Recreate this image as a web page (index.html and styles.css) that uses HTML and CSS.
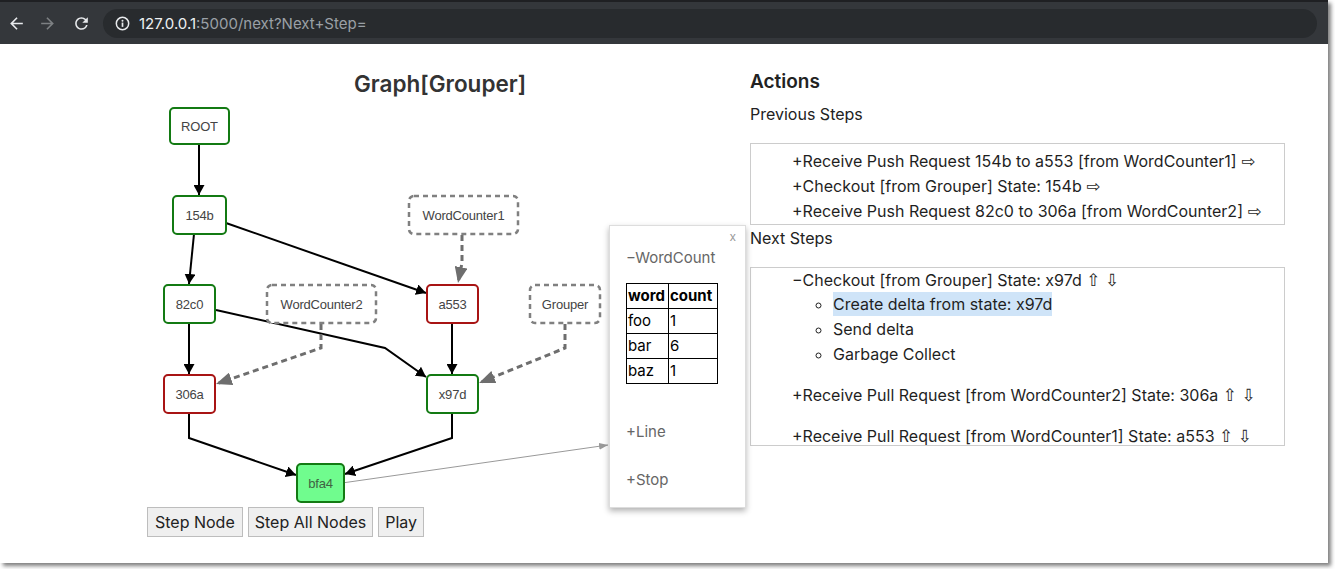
FILE: index.html
```html
<!DOCTYPE html>
<html>
<head>
<meta charset="utf-8">
<link rel="stylesheet" href="styles.css">
</head>
<body>
<div class="window">
  <div class="tabstrip"></div>
  <div class="toolbar">
    <span class="nav back"><svg width="19" height="19" viewBox="0 0 24 24"><path d="M20 11H7.83l5.59-5.59L12 4l-8 8 8 8 1.41-1.41L7.83 13H20v-2z" fill="#e8eaed"/></svg></span>
    <span class="nav fwd"><svg width="19" height="19" viewBox="0 0 24 24"><path d="M12 4l-1.41 1.41L16.17 11H4v2h12.17l-5.58 5.59L12 20l8-8z" fill="#7d8083"/></svg></span>
    <span class="nav reload"><svg width="19" height="19" viewBox="0 0 24 24"><path d="M17.65 6.35A7.958 7.958 0 0 0 12 4c-4.42 0-7.990 3.58-7.99 8s3.57 8 7.99 8c3.73 0 6.84-2.55 7.73-6h-2.08A5.99 5.99 0 0 1 12 18c-3.31 0-6-2.69-6-6s2.69-6 6-6c1.66 0 3.14.69 4.22 1.78L13 11h7V4l-2.35 2.35z" fill="#e8eaed"/></svg></span>
    <div class="omnibox">
      <svg class="info" width="15" height="15" viewBox="0 0 16 16"><circle cx="8" cy="8" r="6.6" fill="none" stroke="#e8eaed" stroke-width="1.6"/><rect x="7.1" y="7" width="1.8" height="4.6" fill="#e8eaed"/><circle cx="8" cy="5" r="1.05" fill="#e8eaed"/></svg>
      <span class="host">127.0.0.1</span><span class="path">:5000/next?Next+Step=</span>
    </div>
  </div>
  <div class="page">
    <div class="graph-col">
      <h2 class="graph-title">Graph[Grouper]</h2>
      <svg class="graph" width="590" height="410" viewBox="145 97 590 410">
        <defs>
          <marker id="ah" viewBox="0 0 10 11" refX="10" refY="5.5" markerWidth="10" markerHeight="11" markerUnits="userSpaceOnUse" orient="auto"><path d="M0,0 L10,5.5 L0,11 z" fill="#000" stroke="none"/></marker>
          <marker id="ahg" viewBox="0 0 16 13" refX="13" refY="6.5" markerWidth="16" markerHeight="13" markerUnits="userSpaceOnUse" orient="auto"><path d="M0,0 L16,6.5 L0,13 z" fill="#6e6e6e" stroke="none"/></marker>
          <marker id="aht" viewBox="0 0 9 7" refX="9" refY="3.5" markerWidth="9" markerHeight="7" markerUnits="userSpaceOnUse" orient="auto"><path d="M0,0 L9,3.5 L0,7 z" fill="#999" stroke="none"/></marker>
        </defs>
        <g class="edges">
          <path d="M199,144 L199,195" marker-end="url(#ah)"/>
          <path d="M194,234 L189,284" marker-end="url(#ah)"/>
          <path d="M226,223 L426,293" marker-end="url(#ah)"/>
          <path d="M216,310 L385,348 L426,377" marker-end="url(#ah)"/>
          <path d="M189,323 L189,374" marker-end="url(#ah)"/>
          <path d="M452,323 L452,374" marker-end="url(#ah)"/>
          <path d="M189,413 L189,438 L296,475" marker-end="url(#ah)"/>
          <path d="M452,413 L452,438 L345,474" marker-end="url(#ah)"/>
        </g>
        <g class="dep-edges">
          <path d="M462,235 L462,263 L458.6,280" marker-end="url(#ahg)"/>
          <path d="M321,324 L321,348 L218.8,383" marker-end="url(#ahg)"/>
          <path d="M565,324 L565,348 L481.8,381.9" marker-end="url(#ahg)"/>
        </g>
        <path class="link" d="M342,483 L608,445" marker-end="url(#aht)"/>
        <g class="nodes">
          <rect class="ok" x="170" y="108" width="59" height="36" rx="4"/>
          <text x="199.5" y="126">ROOT</text>
          <rect class="ok" x="173" y="196" width="53" height="38" rx="4"/>
          <text x="199.5" y="215">154b</text>
          <rect class="dep" x="409" y="196" width="109" height="38" rx="5"/>
          <text x="463.5" y="215">WordCounter1</text>
          <rect class="ok" x="164" y="285" width="51" height="38" rx="4"/>
          <text x="189.5" y="304">82c0</text>
          <rect class="dep" x="267" y="285" width="109" height="38" rx="5"/>
          <text x="321.5" y="304">WordCounter2</text>
          <rect class="bad" x="427" y="285" width="51" height="38" rx="4"/>
          <text x="452.5" y="304">a553</text>
          <rect class="dep" x="530" y="285" width="70" height="38" rx="5"/>
          <text x="565" y="304">Grouper</text>
          <rect class="bad" x="164" y="375" width="51" height="38" rx="4"/>
          <text x="189.5" y="394">306a</text>
          <rect class="ok" x="427" y="375" width="51" height="38" rx="4"/>
          <text x="452.5" y="394">x97d</text>
          <rect class="ok current" x="297" y="464" width="47" height="38" rx="4"/>
          <text class="current-label" x="320.5" y="483">bfa4</text>
        </g>
      </svg>
      <div class="controls">
        <button class="btn">Step Node</button>
        <button class="btn">Step All Nodes</button>
        <button class="btn">Play</button>
      </div>
    </div>
    <div class="actions-col">
      <h3 class="actions-title">Actions</h3>
      <p class="section-label">Previous Steps</p>
      <div class="step-box prev-box">
        <ul class="steps">
          <li>+Receive Push Request 154b to a553 [from WordCounter1] <span class="sym">⇨</span></li>
          <li>+Checkout [from Grouper] State: 154b <span class="sym">⇨</span></li>
          <li>+Receive Push Request 82c0 to 306a [from WordCounter2] <span class="sym">⇨</span></li>
        </ul>
      </div>
      <div class="section-label tight">Next Steps</div>
      <div class="step-box next-box">
        <ul class="steps">
          <li class="step">−Checkout [from Grouper] State: x97d <span class="sym">⇧</span> <span class="sym">⇩</span>
            <ul class="substeps">
              <li><span class="selected">Create delta from state: x97d</span></li>
              <li>Send delta</li>
              <li>Garbage Collect</li>
            </ul>
          </li>
          <li class="step">+Receive Pull Request [from WordCounter2] State: 306a <span class="sym">⇧</span> <span class="sym">⇩</span></li>
          <li class="step">+Receive Pull Request [from WordCounter1] State: a553 <span class="sym">⇧</span> <span class="sym">⇩</span></li>
        </ul>
      </div>
    </div>
    <div class="popup">
      <span class="popup-close">x</span>
      <div class="popup-item open">−WordCount</div>
      <table class="counts">
        <tr><th class="c1">word</th><th class="c2">count</th></tr>
        <tr><td>foo</td><td>1</td></tr>
        <tr><td>bar</td><td>6</td></tr>
        <tr><td>baz</td><td>1</td></tr>
      </table>
      <div class="popup-item line-item">+Line</div>
      <div class="popup-item stop-item">+Stop</div>
    </div>
  </div>
</div>
</body>
</html>
```
FILE: styles.css
```css
html, body {
  margin: 0;
  padding: 0;
  background: #ffffff;
}
body {
  width: 1335px;
  height: 569px;
  overflow: hidden;
  font-family: Inter, "Liberation Sans", "DejaVu Sans", sans-serif;
  color: #1f1f1f;
}
.window {
  width: 1328px;
  height: 563px;
  background: #fff;
  box-shadow: 3px 3px 4px rgba(0, 0, 0, 0.5);
  overflow: hidden;
}
.tabstrip {
  height: 2px;
  background: #1f2023;
}
.toolbar {
  height: 42px;
  background: #34373b;
  display: flex;
  align-items: center;
}
.nav {
  display: flex;
  width: 19px;
  height: 19px;
}
.back { margin-left: 7px; }
.fwd { margin-left: 12px; }
.reload { margin-left: 15px; }
.omnibox {
  margin-left: 12px;
  width: 1214px;
  height: 29px;
  border-radius: 15px;
  background: #282b2e;
  display: flex;
  align-items: center;
  font-family: Inter, "Liberation Sans", sans-serif;
  font-size: 15px;
}
.info {
  margin-left: 12px;
  margin-right: 9px;
}
.host { color: #eef0f2; }
.path { color: #9aa0a6; }

.page {
  position: relative;
  display: flex;
  height: 519px;
}
.graph-col {
  margin-left: 145px;
  width: 590px;
  display: flex;
  flex-direction: column;
}
.graph-title {
  margin: 27px 0 0;
  height: 26px;
  line-height: 26px;
  text-align: center;
  font-size: 22.5px;
  font-weight: 600;
  color: #333;
}
.graph { display: block; }
.edges path {
  fill: none;
  stroke: #000;
  stroke-width: 2;
}
.dep-edges path {
  fill: none;
  stroke: #6e6e6e;
  stroke-width: 3;
  stroke-dasharray: 6 4;
}
.link {
  fill: none;
  stroke: #999;
  stroke-width: 1;
}
.nodes rect {
  fill: #fff;
  stroke-width: 2;
}
.nodes rect.ok { stroke: #137a13; }
.nodes rect.bad { stroke: #a81414; }
.nodes rect.dep {
  stroke: #808080;
  stroke-width: 2.5;
  stroke-dasharray: 5 4;
}
.nodes rect.current { fill: #70fc8e; }
.nodes text {
  font-family: "Liberation Sans", Arial, sans-serif;
  font-size: 13px;
  fill: #444;
  text-anchor: middle;
  dominant-baseline: central;
  letter-spacing: -0.2px;
}
.nodes text.current-label { fill: #3f6243; }

.controls {
  display: flex;
  gap: 5px;
  margin-left: 2px;
}
.btn {
  height: 30px;
  padding: 0 6px;
  margin: 0;
  border: 1px solid #bdbdbd;
  border-radius: 0;
  background: #efefef;
  color: #222;
  font-family: Inter, "Liberation Sans", sans-serif;
  font-size: 16px;
}
.btn:first-child { padding: 0 7px; }

.actions-col {
  margin-left: 15px;
  width: 535px;
  display: flex;
  flex-direction: column;
}
.actions-title {
  margin: 26px 0 0;
  line-height: 24px;
  font-size: 19px;
  font-weight: 600;
  color: #222;
}
.section-label {
  margin: 8px 0 0;
  line-height: 24px;
  font-size: 16px;
  color: #222;
}
.section-label.tight { margin: 1px 0 0; }
.step-box {
  margin-top: 17px;
  border: 1px solid #cccccc;
}
.prev-box { height: 80px; overflow: hidden; }
.next-box { height: 177px; overflow: visible; }
.steps {
  list-style: none;
  margin: 0;
  padding: 5px 0 0 41px;
  font-size: 16px;
  line-height: 25px;
  color: #1f1f1f;
}
.next-box .steps { padding-top: 0; }
.step + .step { margin-top: 16px; }
.substeps {
  list-style: circle;
  margin: -1px 0 0;
  padding-left: 41px;
}
.sym {
  font-family: "DejaVu Sans", sans-serif;
  font-size: 17px;
  line-height: 1;
}
.selected {
  background: #cfe4f8;
  padding: 2px 0;
}

.popup {
  position: absolute;
  left: 609px;
  top: 181px;
  width: 137px;
  height: 283px;
  background: #fff;
  border: 1px solid #dddddd;
  box-shadow: 0 3px 6px rgba(0, 0, 0, 0.3);
  padding-left: 16px;
  box-sizing: border-box;
  display: flex;
  flex-direction: column;
  align-items: flex-start;
}
.popup-close {
  position: absolute;
  top: 3px;
  right: 9px;
  font-size: 12px;
  color: #999;
}
.popup-item {
  font-size: 15px;
  line-height: 20px;
  color: #666;
}
.popup-item.open { margin-top: 22px; }
.counts {
  margin-top: 15px;
  border-collapse: collapse;
  font-size: 15px;
  color: #000;
}
.counts th, .counts td {
  border: 1px solid #000;
  height: 24px;
  padding: 0 1px;
  text-align: left;
  line-height: 22px;
}
.counts th { font-weight: 700; }
.counts .c1 { width: 39px; }
.counts .c2 { width: 46px; }
.line-item { margin-top: 38px; }
.stop-item { margin-top: 28px; }
```
